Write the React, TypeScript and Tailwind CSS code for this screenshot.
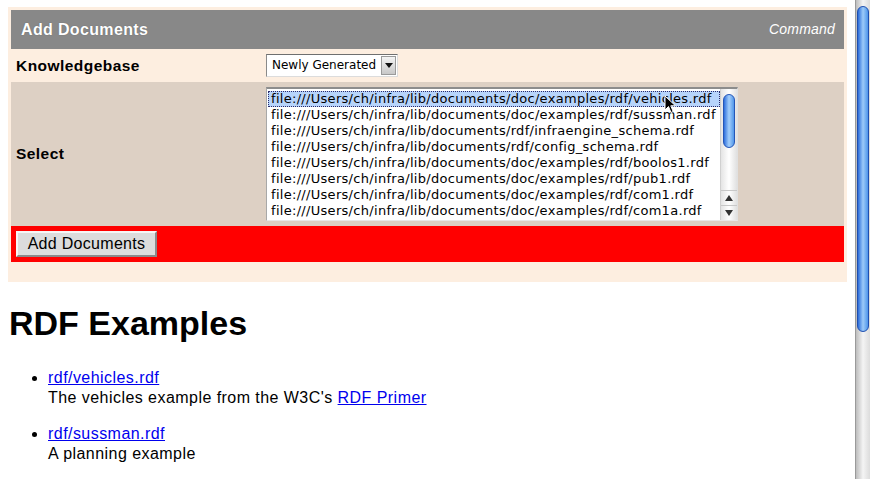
const files = [
  "file:///Users/ch/infra/lib/documents/doc/examples/rdf/vehicles.rdf",
  "file:///Users/ch/infra/lib/documents/doc/examples/rdf/sussman.rdf",
  "file:///Users/ch/infra/lib/documents/rdf/infraengine_schema.rdf",
  "file:///Users/ch/infra/lib/documents/rdf/config_schema.rdf",
  "file:///Users/ch/infra/lib/documents/doc/examples/rdf/boolos1.rdf",
  "file:///Users/ch/infra/lib/documents/doc/examples/rdf/pub1.rdf",
  "file:///Users/ch/infra/lib/documents/doc/examples/rdf/com1.rdf",
  "file:///Users/ch/infra/lib/documents/doc/examples/rdf/com1a.rdf",
];

function PageScrollbar() {
  return (
    <div className="w-[15px] h-full flex flex-col bg-gradient-to-r from-[#bdbdbd] via-[#f4f4f4] to-[#dcdcdc] border-l border-[#9a9a9a]">
      <div className="h-[6px]" />
      <div className="mx-[1px] h-[326px] rounded-full border border-[#1f4fb0] bg-gradient-to-r from-[#2a6ad8] via-[#9ccaf8] to-[#4d95ea]" />
      <div className="flex-1" />
    </div>
  );
}

function Cursor() {
  return (
    <svg
      className="absolute left-[397px] top-[6px]"
      width="13"
      height="20"
      viewBox="0 0 13 20"
    >
      <path
        d="M1 1 L1 15 L4.5 11.5 L7 17.5 L9.2 16.6 L6.8 10.8 L11.5 10.8 Z"
        fill="#000"
        stroke="#fff"
        strokeWidth="1"
      />
    </svg>
  );
}

function FileList() {
  return (
    <div className="relative w-[472px] h-[134px] bg-white border-t-2 border-l border-t-[#8c8c8c] border-l-[#a8a8a8] border-r border-b border-r-[#e0e0e0] border-b-[#e8e8e8] flex">
      <div className="flex-1 min-w-0 pt-[2px] pl-[1px] font-['DejaVu_Sans',sans-serif] text-[13px] tracking-[0.3px] text-black">
        {files.map((f, i) => (
          <div
            key={f}
            className={
              i === 0
                ? "h-4 leading-4 pl-[3px] whitespace-nowrap bg-[#b7d4fb] outline outline-1 outline-dotted outline-[#2b2b6b] -outline-offset-1"
                : "h-4 leading-4 pl-[3px] whitespace-nowrap"
            }
          >
            {f}
          </div>
        ))}
      </div>
      <div className="w-[17px] flex flex-col bg-gradient-to-r from-[#e4e4e4] via-[#ffffff] to-[#e0e0e0] border-l border-[#d0d0d0]">
        <div className="h-[5px]" />
        <div className="mx-[2px] h-[54px] rounded-full border border-[#2456b8] bg-gradient-to-r from-[#2f6fdc] via-[#a4cffa] to-[#4f96ea]" />
        <div className="flex-1" />
        <div className="h-[15px] flex items-center justify-center border-t border-[#c8c8c8]">
          <svg width="8" height="6" viewBox="0 0 8 6">
            <path d="M4 0 L8 6 L0 6 Z" fill="#333" />
          </svg>
        </div>
        <div className="h-[15px] flex items-center justify-center border-t border-[#c8c8c8]">
          <svg width="8" height="6" viewBox="0 0 8 6">
            <path d="M0 0 L8 0 L4 6 Z" fill="#333" />
          </svg>
        </div>
      </div>
      <Cursor />
    </div>
  );
}

export default function App() {
  return (
    <div className="w-[870px] h-[479px] overflow-hidden bg-white flex">
      <div className="flex-1 min-w-0 px-2 pt-[7px] font-['Liberation_Sans',Arial,sans-serif] text-black">
        <div className="bg-[#fdeee0] p-[3px] pb-5">
          <div className="h-[39px] bg-[#888888] flex items-center justify-between pl-[10px] pr-[9px] text-white">
            <span className="font-bold text-[16px] tracking-[0.35px] [text-shadow:0_0_1px_rgba(0,0,0,0.35)]">
              Add Documents
            </span>
            <span className="italic text-[14px] tracking-[0.2px]">Command</span>
          </div>

          <div className="h-[33px] grid grid-cols-[252px_1fr] items-center">
            <span className="pl-[5px] font-bold text-[15.5px] tracking-[0.45px]">Knowledgebase</span>
            <div className="pl-[3px]">
              <div className="w-[132px] h-[23px] flex bg-white border-t border-l border-t-[#6f6f6f] border-l-[#8a8a8a] border-r border-b border-r-[#dcdcdc] border-b-[#dcdcdc]">
                <span className="flex-1 pl-[5px] leading-[21px] font-['DejaVu_Sans',sans-serif] text-[12px]">
                  Newly Generated
                </span>
                <div className="w-[15px] m-[1px] flex items-center justify-center bg-gradient-to-b from-[#f4f4f4] to-[#c8c8c8] border border-[#9a9a9a]">
                  <svg width="8" height="5" viewBox="0 0 8 5">
                    <path d="M0 0 L8 0 L4 5 Z" fill="#111" />
                  </svg>
                </div>
              </div>
            </div>
          </div>

          <div className="h-[144px] grid grid-cols-[252px_1fr] items-center bg-[#ddd0c4]">
            <span className="pl-[5px] font-bold text-[15.5px] tracking-[0.45px]">Select</span>
            <div className="pl-[3px]">
              <FileList />
            </div>
          </div>

          <div className="h-[36px] bg-[#ff0000] flex items-center pl-[5px]">
            <button className="w-[141px] h-[26px] bg-[#dcdcdc] border-2 border-t-[#f6f6f6] border-l-[#f6f6f6] border-r-[#8a8a8a] border-b-[#8a8a8a] text-[16px] tracking-[0.3px] leading-none">
              Add Documents
            </button>
          </div>
        </div>

        <h1 className="mt-[21px] text-[34px] leading-[40px] font-bold pl-[1px]">RDF Examples</h1>

        <ul className="mt-[25px] pl-10 list-disc text-[16px] tracking-[0.45px] leading-[20px]">
          <li className="mb-4">
            <a href="#" className="text-[#0000ee] underline">rdf/vehicles.rdf</a>
            <br />
            The vehicles example from the W3C's{" "}
            <a href="#" className="text-[#0000ee] underline">RDF Primer</a>
          </li>
          <li>
            <a href="#" className="text-[#0000ee] underline">rdf/sussman.rdf</a>
            <br />
            A planning example
          </li>
        </ul>
      </div>
      <PageScrollbar />
    </div>
  );
}
